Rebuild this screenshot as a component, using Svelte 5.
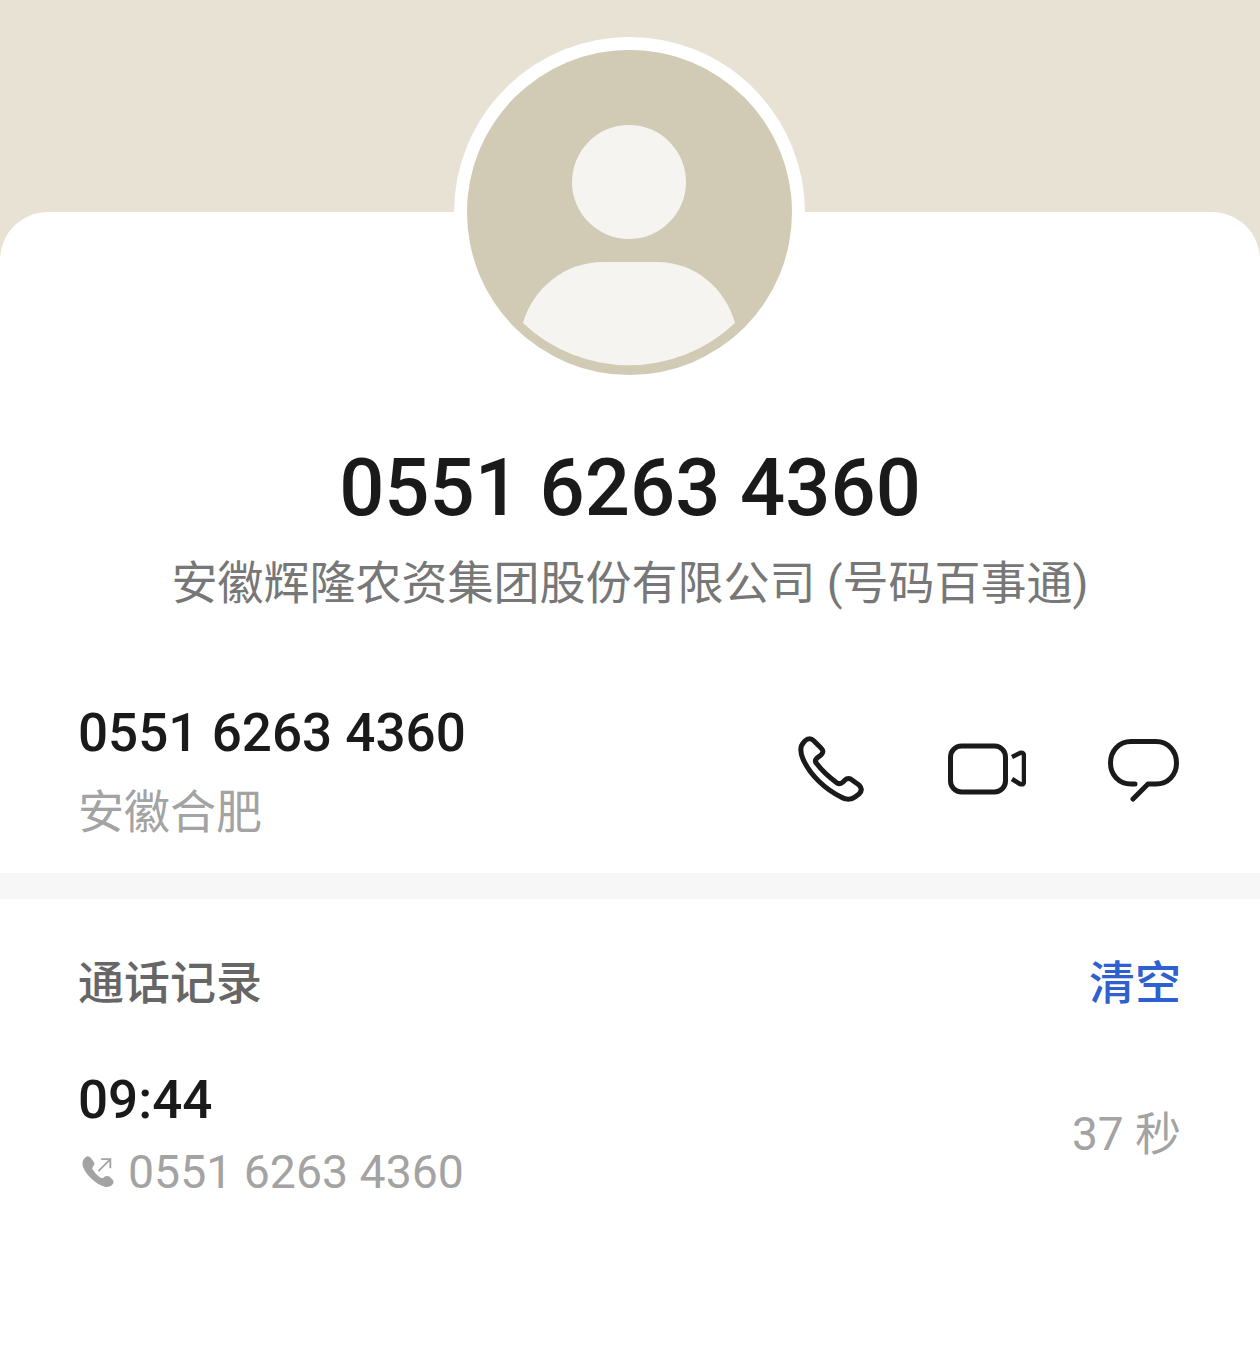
<script>
    const number = '0551 6263 4360';
</script>

<div class="page">
    <div class="hero">
        <div class="avatar">
            <svg width="325" height="325" viewBox="0 0 325 325">
                <circle cx="162.5" cy="162.5" r="162.5" fill="#d1cbb6" />
                <circle cx="162" cy="132" r="57" fill="#f5f4f0" />
                <path d="M56 273 C66 238 98 212 136 212 H190 C228 212 258 238 268 273 A154 154 0 0 1 56 273 Z" fill="#f5f4f0" />
            </svg>
        </div>
    </div>

    <div class="card">
        <div class="title">
            <div class="name">{number}</div>
            <div class="company">安徽辉隆农资集团股份有限公司 (号码百事通)</div>
        </div>

        <div class="contact">
            <div>
                <div class="phone">{number}</div>
                <div class="place">安徽合肥</div>
            </div>
            <div class="actions">
                <svg width="70" height="66" viewBox="0 0 70 66" fill="none" stroke="#1a1a1a" stroke-width="5" stroke-linejoin="round">
                    <path d="M6 6 C9 2 13 2 16 5 L23 12 C26 15 25 17 23 19 L19 22 C17 24 17 26 19 28 C25 36 31 41 39 47 C41 48 43 48 45 46 L47 44 C49 42 52 42 54 44 L61 49 C64 52 64 55 61 58 L57 61 C53 64 48 64 43 61 C27 53 12 39 5 23 C2 16 2 10 6 6 Z" />
                </svg>
                <svg width="78" height="54" viewBox="0 0 78 54" fill="none" stroke="#1a1a1a" stroke-width="5" stroke-linejoin="round">
                    <rect x="2.5" y="4" width="55" height="46" rx="11" />
                    <path d="M64 15 L72 11 C75 10 76 12 76 14 V39 C76 42 75 43 72 42 L64 37" stroke-width="4.5" />
                </svg>
                <svg width="74" height="66" viewBox="0 0 74 66" fill="none" stroke="#1a1a1a" stroke-width="5" stroke-linecap="round" stroke-linejoin="round">
                    <path d="M29 48 H25 C13 48 4.5 39 4.5 27 C4.5 15 13 5.5 25 5.5 H50 C62 5.5 70.5 15 70.5 27 C70.5 39 62 48 50 48 H42 L27 63" />
                </svg>
            </div>
        </div>

        <div class="divider"></div>

        <div class="records">
            <div class="records-head">
                <span class="records-title">通话记录</span>
                <span class="clear">清空</span>
            </div>
            <div class="record">
                <div>
                    <div class="time">09:44</div>
                    <div class="record-number">
                        <svg width="33" height="34" viewBox="0 0 36 36">
                            <path d="M5 2 C7 0 9 1 11 3 L14 7 C15 9 15 10 13 12 C12 14 12 15 14 17 C16 20 18 22 21 24 C23 25 24 25 26 23 C28 22 29 22 31 23 L34 26 C36 28 36 30 34 32 C32 34 29 35 26 34 C16 31 6 22 2 12 C1 8 2 4 5 2 Z" fill="#a3a3a3" />
                            <path d="M19 17 L31 5 M22 4 H32 V14" fill="none" stroke="#a3a3a3" stroke-width="2" />
                        </svg>
                        <span>{number}</span>
                    </div>
                </div>
                <div class="duration">37 秒</div>
            </div>
        </div>
    </div>
</div>

<style>
    :global(body) {
        margin: 0;
        background: #ffffff;
    }

    .page {
        width: 1260px;
        height: 1345px;
        background: #e7e2d3;
        font-family: Roboto, "Noto Sans CJK SC", sans-serif;
        overflow: hidden;
    }

    .hero {
        height: 212px;
        position: relative;
    }

    .avatar {
        position: absolute;
        left: 454px;
        top: 37px;
        width: 325px;
        height: 325px;
        border: 13px solid #ffffff;
        border-radius: 50%;
        z-index: 1;
    }

    .avatar svg {
        display: block;
    }

    .card {
        background: #ffffff;
        border-radius: 48px 48px 0 0;
        height: 1133px;
    }

    .title {
        padding-top: 229px;
        text-align: center;
    }

    .name {
        font-size: 79.5px;
        font-weight: 500;
        line-height: 94px;
        color: #1a1a1a;
    }

    .company {
        font-size: 46px;
        line-height: 62px;
        color: #777777;
        margin-top: 17px;
    }

    .contact {
        display: flex;
        justify-content: space-between;
        align-items: center;
        padding: 87px 78px 30px;
    }

    .phone {
        font-size: 53px;
        font-weight: 500;
        line-height: 64px;
        color: #1a1a1a;
    }

    .place {
        font-size: 46px;
        line-height: 62px;
        color: #a3a3a3;
        margin-top: 16px;
    }

    .actions {
        display: flex;
        align-items: center;
        gap: 80px;
        margin: 0 2px 6px 0;
    }

    .divider {
        height: 26px;
        background: #f7f7f7;
    }

    .records {
        padding: 53px 78px 0;
    }

    .records-head {
        display: flex;
        justify-content: space-between;
        font-size: 46px;
        font-weight: 500;
        line-height: 62px;
    }

    .records-title {
        color: #666666;
    }

    .clear {
        color: #2f60cf;
        margin-right: 1px;
    }

    .record {
        display: flex;
        justify-content: space-between;
        align-items: center;
        margin-top: 54px;
    }

    .time {
        font-size: 53px;
        font-weight: 500;
        line-height: 64px;
        color: #1a1a1a;
    }

    .record-number {
        display: flex;
        align-items: center;
        gap: 14px;
        font-size: 46.4px;
        line-height: 62px;
        color: #a3a3a3;
        margin-top: 9px;
    }

    .record-number svg {
        margin-left: 3px;
    }

    .duration {
        font-size: 46px;
        line-height: 62px;
        color: #a3a3a3;
        margin: 0 1px 4px 0;
    }
</style>
